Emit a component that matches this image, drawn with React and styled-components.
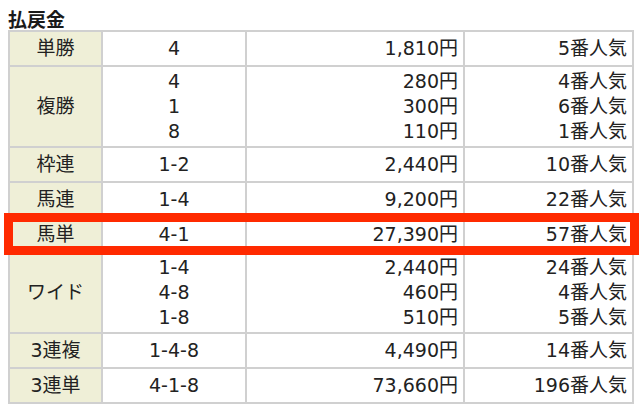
import React from "react";
import styled, { createGlobalStyle } from "styled-components";

const Global = createGlobalStyle`
  html, body { margin: 0; padding: 0; background: #fff; }
  body { font-family: "DejaVu Sans", "Noto Sans CJK JP", sans-serif; color: #222; }
`;

const Page = styled.div`
  position: relative;
  width: 640px;
  height: 408px;
  padding: 0 8px;
  box-sizing: border-box;
  overflow: hidden;
`;

const Title = styled.h2`
  margin: 0;
  padding-top: 8px;
  height: 30px;
  box-sizing: border-box;
  font-family: "Noto Sans CJK JP", sans-serif;
  font-size: 19px;
  line-height: 22px;
  font-weight: 700;
  color: #1a1a1a;
`;

const Table = styled.table`
  width: 624px;
  table-layout: fixed;
  border-collapse: collapse;
  font-size: 19px;
`;

const Label = styled.th`
  background: #efefd7;
  border: 2px solid #d0d0d0;
  font-weight: 400;
  text-align: center;
  vertical-align: middle;
  padding: 4px 2px;
  line-height: 25px;
  white-space: nowrap;
`;

const Cell = styled.td`
  border: 2px solid #d0d0d0;
  text-align: ${(p) => p.$align || "center"};
  vertical-align: middle;
  padding: ${(p) => (p.$multi ? "2px" : "4px")} ${(p) => (p.$align === "right" ? "5px" : "4px")};
  line-height: 25px;
  white-space: nowrap;
`;

const Line = styled.div``;

const Highlight = styled.div`
  position: absolute;
  left: 4px;
  top: 213px;
  width: 635px;
  height: 42px;
  border: 9px solid #ff2a00;
  box-sizing: border-box;
  pointer-events: none;
`;

const rows = [
  ["単勝", ["4"], ["1,810円"], ["5番人気"]],
  ["複勝", ["4", "1", "8"], ["280円", "300円", "110円"], ["4番人気", "6番人気", "1番人気"]],
  ["枠連", ["1-2"], ["2,440円"], ["10番人気"]],
  ["馬連", ["1-4"], ["9,200円"], ["22番人気"]],
  ["馬単", ["4-1"], ["27,390円"], ["57番人気"]],
  ["ワイド", ["1-4", "4-8", "1-8"], ["2,440円", "460円", "510円"], ["24番人気", "4番人気", "5番人気"]],
  ["3連複", ["1-4-8"], ["4,490円"], ["14番人気"]],
  ["3連単", ["4-1-8"], ["73,660円"], ["196番人気"]],
];

const Lines = ({ items }) => items.map((t, i) => <Line key={i}>{t}</Line>);

export default function App() {
  return (
    <Page>
      <Global />
      <Title>払戻金</Title>
      <Table>
        <colgroup>
          <col style={{ width: 93 }} />
          <col style={{ width: 144 }} />
          <col style={{ width: 218 }} />
          <col style={{ width: 169 }} />
        </colgroup>
        <tbody>
          {rows.map(([label, nums, pays, pops]) => {
            const multi = nums.length > 1;
            return (
              <tr key={label}>
                <Label>{label}</Label>
                <Cell $multi={multi}><Lines items={nums} /></Cell>
                <Cell $multi={multi} $align="right"><Lines items={pays} /></Cell>
                <Cell $multi={multi} $align="right"><Lines items={pops} /></Cell>
              </tr>
            );
          })}
        </tbody>
      </Table>
      <Highlight />
    </Page>
  );
}
